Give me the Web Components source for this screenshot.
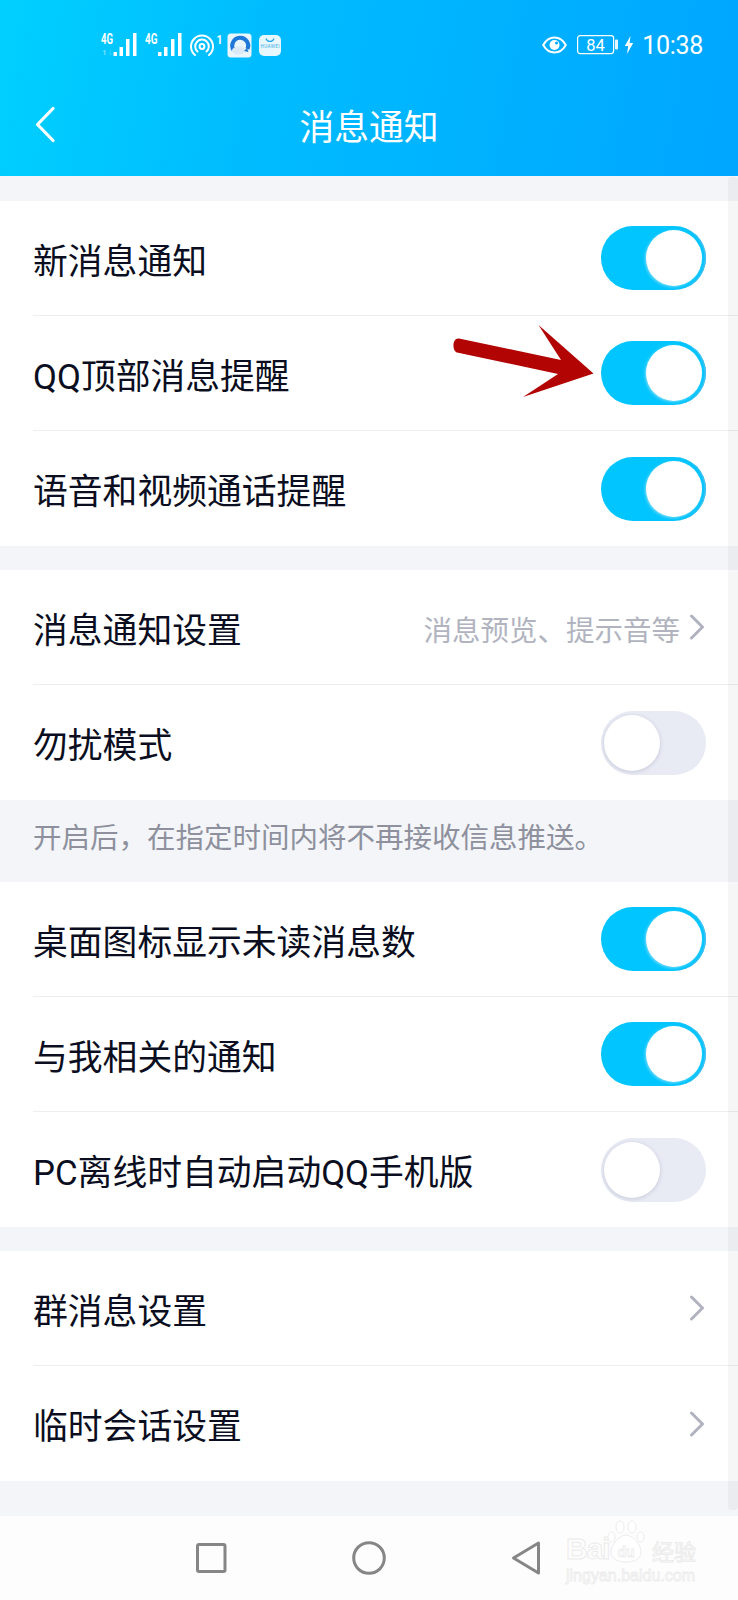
<!DOCTYPE html>
<html lang="zh"><head><meta charset="utf-8"><title>消息通知</title>
<style>
html,body{margin:0;padding:0;background:#f3f5f9}
body{width:738px;height:1600px;overflow:hidden;font-family:Roboto,"Noto Sans CJK SC","Noto Sans",sans-serif}
</style></head>
<body>
<x-app>
  <x-topbar title="消息通知"></x-topbar>
  <x-group first>
    <x-row label="新消息通知"><x-toggle on></x-toggle></x-row>
    <x-row label="QQ顶部消息提醒"><x-toggle on></x-toggle></x-row>
    <x-row label="语音和视频通话提醒" last><x-toggle on></x-toggle></x-row>
  </x-group>
  <x-group>
    <x-row label="消息通知设置" detail="消息预览、提示音等"><x-chevron></x-chevron></x-row>
    <x-row label="勿扰模式" last><x-toggle></x-toggle></x-row>
  </x-group>
  <x-note>开启后，在指定时间内将不再接收信息推送。</x-note>
  <x-group flush>
    <x-row label="桌面图标显示未读消息数"><x-toggle on></x-toggle></x-row>
    <x-row label="与我相关的通知"><x-toggle on></x-toggle></x-row>
    <x-row label="PC离线时自动启动QQ手机版" last><x-toggle></x-toggle></x-row>
  </x-group>
  <x-group>
    <x-row label="群消息设置"><x-chevron></x-chevron></x-row>
    <x-row label="临时会话设置" last><x-chevron></x-chevron></x-row>
  </x-group>
  <x-navbar></x-navbar>
  <x-arrow></x-arrow>
</x-app>
<script>
function def(name, css, html){
  customElements.define(name, class extends HTMLElement{
    constructor(){super();const r=this.attachShadow({mode:'open'});
      r.innerHTML='<style>'+css+'</style>'+html;}
    connectedCallback(){
      this.shadowRoot.querySelectorAll('[data-attr]').forEach(n=>{n.textContent=this.getAttribute(n.dataset.attr)||''});
    }
  });
}
def('x-app',
 `:host{display:flex;flex-direction:column;position:relative;width:738px;height:1600px;background:#f3f5f9;overflow:hidden}
  .sb{position:absolute;left:728px;top:177px;width:10px;height:1333px;background:rgba(0,0,0,.035);border-radius:3px}`,
 `<slot></slot><div class="sb"></div>`);

def('x-topbar',
 `:host{display:block;height:176px;background:linear-gradient(100deg,#00d0ff 0%,#00bcff 35%,#00a6ff 100%);color:#fff;flex:none}
  .status{height:90px;display:flex;align-items:flex-start;padding:33px 35px 0 101px;box-sizing:border-box}
  .left{display:flex;align-items:flex-start;height:24px}
  .right{margin-left:auto;display:flex;align-items:center;height:24px}
  .time{font:400 25px/24px Roboto,sans-serif;letter-spacing:-.3px;margin-left:8px;position:relative;top:1px}
  .nav{height:86px;display:flex;align-items:center;justify-content:center;position:relative;padding-bottom:10px;box-sizing:border-box}
  .t{font-size:34.800px;line-height:46px}
  svg{display:block;overflow:visible}
  .back{position:absolute;left:34px;top:15px}
  text{font-family:Roboto,"Liberation Sans",sans-serif}`,
 `<div class="status">
   <div class="left">
    <svg width="38" height="24" viewBox="0 0 38 24">
      <text x="0" y="11" font-size="15" font-weight="700" fill="#fff" textLength="12" lengthAdjust="spacingAndGlyphs">4G</text>
      <text x="1" y="22" font-size="8" font-weight="700" fill="#fff" fill-opacity=".45" textLength="10">1↓</text>
      <g fill="#fff"><rect x="12.500" y="19" width="3.500" height="4" rx=".5"/><rect x="18.500" y="14" width="3.500" height="9"/><rect x="25" y="6" width="3.500" height="17"/><rect x="32" y="0" width="3.500" height="23"/></g>
    </svg>
    <svg width="38" height="24" viewBox="0 0 38 24" style="margin-left:6px">
      <text x="0" y="11" font-size="15" font-weight="700" fill="#fff" textLength="12.500" lengthAdjust="spacingAndGlyphs">4G</text>
      <g fill="#fff"><rect x="13" y="19" width="3.500" height="4" rx=".5"/><rect x="19" y="14" width="3.500" height="9"/><rect x="26" y="6" width="3.500" height="17"/><rect x="33" y="0" width="3.500" height="23"/></g>
    </svg>
    <svg width="36" height="24" viewBox="0 0 36 24" style="margin-left:6px">
      <g fill="none" stroke="#fff" stroke-width="2" stroke-linecap="round"><path d="M6 22A11 11 0 1 1 20 22"/><path d="M8.500 18.500A6.800 6.800 0 1 1 17.500 18.500"/><circle cx="13" cy="13.500" r="2.400"/></g>
      <text x="27.500" y="10.500" font-size="13" font-weight="700" fill="#fff" textLength="6" lengthAdjust="spacingAndGlyphs">1</text>
    </svg>
    <svg width="25" height="25" viewBox="0 0 25 25" style="margin-left:2px">
      <rect x=".5" y=".5" width="24" height="24" rx="3.500" fill="#eaf6fd"/>
      <path d="M6.500 17A8 8 0 1 1 20.500 16" fill="none" stroke="#1d78d8" stroke-width="4"/>
      <ellipse cx="11.500" cy="17.500" rx="6.500" ry="4" fill="#dbe8f6"/>
      <path d="M17 18l3-3 1.500 4z" fill="#1d78d8"/>
    </svg>
    <svg width="23" height="23" viewBox="0 0 23 23" style="margin-left:7px;margin-top:2px">
      <rect width="22" height="21" rx="5" fill="#e6f7fd"/>
      <path d="M7 3.500a4.200 4.200 0 0 0 8 0" fill="none" stroke="#2aa7e8" stroke-width="1.200"/>
      <text x="11" y="13" font-size="4.500" text-anchor="middle" fill="#3aa9e6" textLength="19">HUAWEI</text>
    </svg>
   </div>
   <div class="right">
    <svg width="25" height="18" viewBox="0 0 25 18" style="margin-right:10px"><path d="M1.200 9C4 4 8 1.500 12.500 1.500S21 4 23.800 9C21 14 17 16.500 12.500 16.500S4 14 1.200 9z" fill="none" stroke="#fff" stroke-width="2"/><circle cx="12.500" cy="9" r="5" fill="#fff"/><circle cx="14.500" cy="7" r="1.500" fill="#00aaff"/></svg>
    <svg width="42" height="20" viewBox="0 0 42 20"><rect x=".6" y=".6" width="36" height="18" rx="2.500" fill="none" stroke="#fff" stroke-width="1.200"/><text x="18.500" y="16" font-size="16.500" text-anchor="middle" fill="#fff">84</text><rect x="38" y="4.500" width="3" height="10" rx="1" fill="#fff" opacity=".9"/></svg>
    <svg width="10" height="18" viewBox="0 0 10 18" style="margin-left:5px"><path d="M6.500 0L.8 10h3.400L3 18l6.200-11H5.600z" fill="#fff"/></svg>
    <span class="time">10:38</span>
   </div>
  </div>
  <div class="nav">
   <svg class="back" width="22" height="38" viewBox="0 0 22 38"><path d="M19 3.500L3.500 19.500 19 35.500" fill="none" stroke="#fff" stroke-width="3.200" stroke-linecap="round" stroke-linejoin="round"/></svg>
   <span class="t" data-attr="title"></span>
  </div>`);

def('x-group',
 `:host{display:block;background:#fff;margin-top:24px;flex:none}
  :host([first]){margin-top:25px}
  :host([flush]){margin-top:0}`,
 `<slot></slot>`);

def('x-row',
 `:host{display:block;padding-left:33px;background:#fff}
  .r{height:115px;box-sizing:border-box;border-bottom:1px solid #eceef2;display:flex;align-items:center;padding-right:32px;padding-bottom:1px}
  :host([last]) .r{border-bottom:0;padding-bottom:0}
  .l{font-size:34.800px;line-height:46px;color:#0a0e20;white-space:nowrap;flex:none;margin-top:8px}
  :host([last]) .l{margin-top:6px}
  .d{margin-left:auto;font-size:28.500px;line-height:40px;color:#b1b4bf;white-space:nowrap;margin-right:9px;margin-top:10px}
  .e{margin-left:auto;display:flex;align-items:center}
  .d:not(:empty)+.e{margin-left:0}`,
 `<div class="r"><span class="l" data-attr="label"></span><span class="d" data-attr="detail"></span><span class="e"><slot></slot></span></div>`);

def('x-toggle',
 `:host{display:block;width:105px;height:64px;position:relative;border-radius:32px;background:#e8eaf4;flex:none}
  :host([on]){background:#00c5ff;box-shadow:inset -2px 0 1px -0.500px #45bfee}
  .k{position:absolute;top:4px;left:3px;width:56px;height:56px;border-radius:50%;background:#fff;box-shadow:0 1px 4px rgba(60,70,110,.2)}
  :host([on]) .k{left:45px;box-shadow:-1px 1px 3px rgba(150,225,250,.8)}`,
 `<div class="k"></div>`);

def('x-chevron',
 `:host{display:block;width:16px;height:26px;flex:none;margin-right:1px}
  svg{display:block}`,
 `<svg width="16" height="26" viewBox="0 0 16 26"><path d="M2.500 2L13.500 13 2.500 24" fill="none" stroke="#b0b3bf" stroke-width="3" stroke-linejoin="round" stroke-linecap="round"/></svg>`);

def('x-note',
 `:host{display:flex;align-items:center;height:82px;padding-left:33px;padding-bottom:4px;box-sizing:border-box;font-size:28.500px;line-height:40px;color:#8e919d;flex:none;white-space:nowrap}`,
 `<slot></slot>`);

def('x-navbar',
 `:host{display:block;position:absolute;left:0;right:0;top:1516px;height:84px;background:#fdfdfd}
  svg.i{position:absolute}
  .mark{position:absolute;left:566px;top:2px;width:134px;height:70px;color:transparent}
  .b{position:absolute;left:0;top:17px;font:700 30px/28px "Liberation Sans",sans-serif;letter-spacing:-1px;-webkit-text-stroke:1px #ececec}
  .c{position:absolute;left:86px;top:24px;font-size:22px;line-height:22px;-webkit-text-stroke:1px #ececec}
  .u{position:absolute;left:0;top:48px;font:400 16px/20px "Liberation Sans",sans-serif;-webkit-text-stroke:.8px #ececec}`,
 `<svg class="i" style="left:194px;top:25px" width="34" height="34" viewBox="0 0 34 34"><rect x="3.500" y="3.500" width="27.500" height="27" rx="1.500" fill="none" stroke="#868686" stroke-width="3"/></svg>
  <svg class="i" style="left:350px;top:23px" width="38" height="38" viewBox="0 0 38 38"><circle cx="19" cy="19" r="15.300" fill="none" stroke="#868686" stroke-width="3"/></svg>
  <svg class="i" style="left:509px;top:23px" width="34" height="38" viewBox="0 0 34 38"><path d="M29.500 4L4.500 19 29.500 34z" fill="none" stroke="#868686" stroke-width="3" stroke-linejoin="round"/></svg>
  <div class="mark">
     <span class="b">Bai</span>
     <svg style="position:absolute;left:41px;top:2px" width="40" height="46" viewBox="0 0 40 46"><g fill="#fff" stroke="#ececec" stroke-width="1"><ellipse cx="4.500" cy="17" rx="3.500" ry="5"/><ellipse cx="13" cy="7" rx="4" ry="6"/><ellipse cx="25" cy="7" rx="4" ry="6"/><ellipse cx="33.500" cy="17" rx="3.500" ry="5"/><path d="M19 15c6 0 15 9 15 17 0 7-7 10-15 10S4 39 4 32c0-8 9-17 15-17z"/></g><text x="19" y="37" font-size="14" font-weight="700" text-anchor="middle" fill="transparent" stroke="#ececec" stroke-width=".8" font-family="Liberation Sans">du</text></svg>
     <span class="c">经验</span>
     <span class="u">jingyan.baidu.com</span>
  </div>`);

def('x-arrow',
 `:host{display:block;position:absolute;left:450px;top:322px;width:150px;height:80px;pointer-events:none}
  svg{display:block}`,
 `<svg width="150" height="80" viewBox="450 322 150 80"><path d="M459 338.500L561 360 538.500 325 593.500 373.500 523 397 558 374 457 352.500C452 351 452 337.500 459 338.500z" fill="#b30404"/></svg>`);
</script>
</body></html>
